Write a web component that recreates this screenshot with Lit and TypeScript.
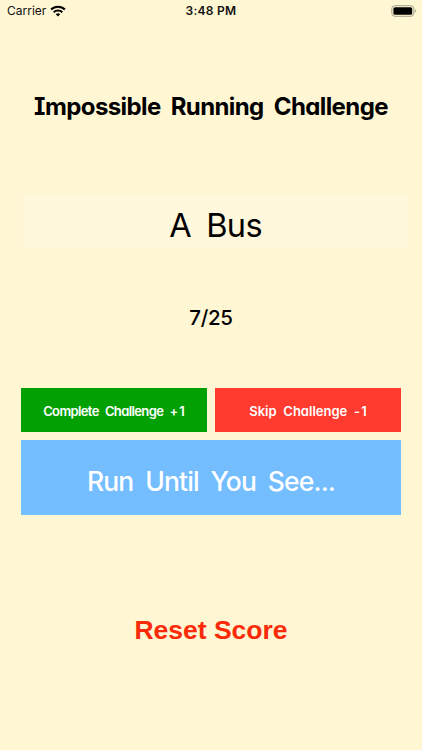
import { LitElement, html, css } from "lit";
import { customElement, state } from "lit/decorators.js";

@customElement("status-bar")
class StatusBar extends LitElement {
  static styles = css`
    :host {
      display: grid;
      grid-template-columns: 1fr auto 1fr;
      align-items: center;
      height: 22px;
      padding: 0 5px 0 7px;
      box-sizing: border-box;
      font: 400 12px/22px Inter, sans-serif;
      color: #111;
    }
    .left { display: flex; align-items: center; gap: 4px; }
    .carrier { letter-spacing: 0; }
    .time { font-weight: 600; font-size: 12px; letter-spacing: 0.26px; position: relative; left: -1px; }
    .right { display: flex; justify-content: flex-end; }
    svg { display: block; }
  `;
  render() {
    return html`
      <div class="left">
        <span class="carrier">Carrier</span>
        <svg width="16" height="12" viewBox="0 0 16 12" fill="none" stroke="#000" stroke-width="2.1">
          <path d="M1.1 4.6a9.8 9.8 0 0 1 13.8 0" />
          <path d="M3.7 7.3a6.1 6.1 0 0 1 8.6 0" />
          <path d="M8 11.6 5.8 9.3a3.2 3.2 0 0 1 4.4 0Z" fill="#000" stroke="none" />
        </svg>
      </div>
      <span class="time">3:48 PM</span>
      <div class="right">
        <svg width="26" height="12" viewBox="0 0 26 12">
          <rect x="0.8" y="0.7" width="22" height="10.6" rx="3" fill="none" stroke="#a39f8b" />
          <rect x="2.4" y="2.2" width="18.8" height="7.6" rx="1.6" fill="#000" />
          <path d="M24.1 4.2v3.6c1.5-.6 1.5-3 0-3.6Z" fill="#a39f8b" />
        </svg>
      </div>
    `;
  }
}

@customElement("app-root")
class AppRoot extends LitElement {
  static styles = css`
    :host {
      display: flex;
      flex-direction: column;
      height: 750px;
      box-sizing: border-box;
      background: #fff6d3;
      color: #000;
      overflow: hidden;
      font-family: "Chalkboard SE", Inter, sans-serif;
      font-feature-settings: "cv11", "cv08", "calt" 0;
    }
    h1, p { margin: 0; text-align: center; white-space: nowrap; }
    h1 {
      margin-top: 67px;
      font-size: 24px;
      line-height: 36px;
      font-weight: 650;
      letter-spacing: -0.6px;
      word-spacing: 5px;
    }
    .challenge {
      margin: 70px 14px 0 23px;
      height: 52px;
      padding-top: 2px;
      box-sizing: border-box;
      background: #fff8dc;
      font-size: 32.5px;
      line-height: 58px;
      letter-spacing: -0.7px;
      word-spacing: 7px;
    }
    .score {
      margin-top: 56px;
      font-size: 20.5px;
      line-height: 30px;
      font-weight: 500;
      letter-spacing: -0.3px;
    }
    .actions {
      margin: 55px 21px 0;
      display: grid;
      grid-template-columns: 186px 186px;
      column-gap: 8px;
      row-gap: 8px;
      grid-template-rows: 44px 75px;
    }
    button {
      border: 0;
      padding: 2px 0 0;
      color: #fff;
      font: inherit;
      font-feature-settings: inherit;
      white-space: nowrap;
    }
    .complete {
      background: #02a003;
      font-size: 13px;
      font-weight: 600;
      letter-spacing: -0.62px;
      word-spacing: 3.5px;
    }
    .skip {
      background: #ff3b30;
      font-size: 13px;
      font-weight: 600;
      letter-spacing: 0;
      word-spacing: 3.5px;
    }
    .delta { letter-spacing: 1.2px; margin-right: -1.2px; }
    .run {
      grid-column: 1 / -1;
      background: #74bdff;
      font-size: 26.5px;
      font-weight: 500;
      padding-top: 6px;
      letter-spacing: -0.85px;
      word-spacing: 5.5px;
    }
    .reset {
      align-self: center;
      margin-top: 97px;
      padding: 0;
      background: none;
      color: #fb2a08;
      font: 700 26.5px/36px "Liberation Sans", Arial, sans-serif;
    }
  `;

  @state() private score = 7;
  @state() private total = 25;

  render() {
    return html`
      <status-bar></status-bar>
      <h1>Impossible Running Challenge</h1>
      <p class="challenge">A Bus</p>
      <p class="score">${this.score}/${this.total}</p>
      <div class="actions">
        <button class="complete" @click=${() => this.score++}>Complete Challenge <span class="delta">+1</span></button>
        <button class="skip" @click=${() => this.score--}>Skip Challenge <span class="delta">-1</span></button>
        <button class="run">Run Until You See...</button>
      </div>
      <button class="reset" @click=${() => (this.score = 0)}>Reset Score</button>
    `;
  }
}
